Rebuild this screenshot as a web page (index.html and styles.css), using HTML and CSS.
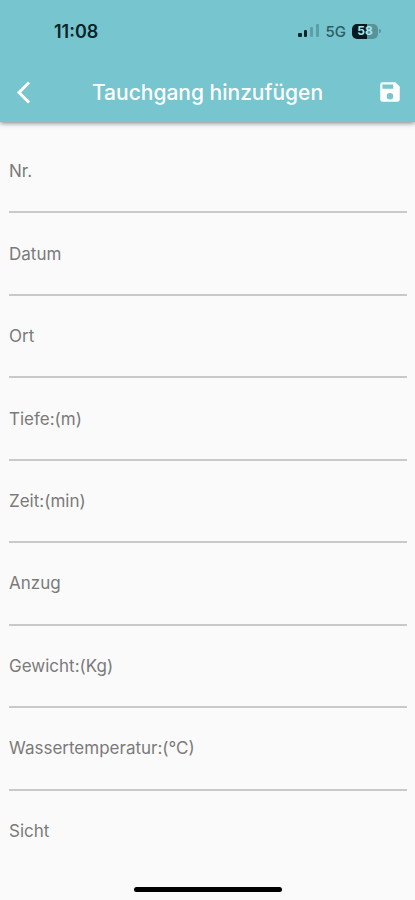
FILE: index.html
```html
<!DOCTYPE html>
<html lang="de">
<head>
<meta charset="utf-8">
<meta name="viewport" content="width=device-width, initial-scale=1">
<title>Tauchgang hinzufügen</title>
<link rel="stylesheet" href="styles.css">
</head>
<body>
<header class="top">
  <div class="status">
    <time class="clock">11:08</time>
    <div class="indicators">
      <svg class="signal" width="22" height="14" viewBox="0 0 22 14" aria-hidden="true">
        <rect x="0" y="9" width="4" height="4" rx="1" fill="#09252b"/>
        <rect x="6" y="6" width="3" height="7" rx="1" fill="#09252b"/>
        <rect x="12" y="3" width="3" height="10" rx="1" fill="#5b9ea6"/>
        <rect x="18" y="0" width="3" height="13" rx="1" fill="#5b9ea6"/>
      </svg>
      <span class="network">5G</span>
      <div class="battery"><span class="level">58</span></div>
    </div>
  </div>
  <div class="bar">
    <button class="icon-button" type="button" aria-label="Zurück">
      <svg width="24" height="24" viewBox="0 0 24 24" aria-hidden="true"><path d="M16 2.500 6 12.500 16 22.500" fill="none" stroke="#fff" stroke-width="3"/></svg>
    </button>
    <h1 class="title">Tauchgang hinzufügen</h1>
    <button class="icon-button" type="submit" form="dive" aria-label="Speichern">
      <svg width="26" height="26" viewBox="0 0 24 24" aria-hidden="true"><path d="M17 3H5a2 2 0 0 0-2 2v14a2 2 0 0 0 2 2h14a2 2 0 0 0 2-2V7l-4-4zm-5 16a3 3 0 1 1 0-6 3 3 0 0 1 0 6zm3-10H5V5h10v4z" fill="#fff"/></svg>
    </button>
  </div>
</header>
<form class="fields" id="dive">
  <div class="field"><label for="nr">Nr.</label><input id="nr" type="text"></div>
  <div class="field"><label for="datum">Datum</label><input id="datum" type="text"></div>
  <div class="field"><label for="ort">Ort</label><input id="ort" type="text"></div>
  <div class="field"><label for="tiefe">Tiefe:(m)</label><input id="tiefe" type="text"></div>
  <div class="field"><label for="zeit">Zeit:(min)</label><input id="zeit" type="text"></div>
  <div class="field"><label for="anzug">Anzug</label><input id="anzug" type="text"></div>
  <div class="field"><label for="gewicht">Gewicht:(Kg)</label><input id="gewicht" type="text"></div>
  <div class="field"><label for="temperatur">Wassertemperatur:(°C)</label><input id="temperatur" type="text"></div>
  <div class="field"><label for="sicht">Sicht</label><input id="sicht" type="text"></div>
</form>
<footer class="home"><div class="home-indicator"></div></footer>
</body>
</html>
```
FILE: styles.css
```css
* {
  box-sizing: border-box;
}

body {
  margin: 0;
  min-height: 100vh;
  display: flex;
  flex-direction: column;
  background: #fafafa;
  font-family: Inter, "Liberation Sans", sans-serif;
}

.top {
  background: #77c5ce;
  box-shadow: 0 1px 5px rgba(0, 0, 0, 0.5);
}

.status {
  height: 62px;
  padding: 0 35px 0 54px;
  display: flex;
  align-items: center;
  justify-content: space-between;
  color: #09252b;
}

.clock {
  font-size: 18px;
  font-weight: 600;
}

.indicators {
  display: flex;
  align-items: center;
  gap: 6px;
}

.network {
  font-size: 15px;
  font-weight: 500;
  color: #2d5d65;
}

.battery {
  position: relative;
  width: 26px;
  height: 15px;
  margin-right: 2px;
  border-radius: 5px;
  background: linear-gradient(90deg, #041a1e 58%, #56939b 58%);
  display: grid;
  place-items: center;
}

.battery::after {
  content: "";
  position: absolute;
  left: 27px;
  top: 5px;
  width: 2px;
  height: 4px;
  border-radius: 0 2px 2px 0;
  background: #56939b;
}

.level {
  font-size: 12px;
  line-height: 14px;
  font-weight: 700;
  color: #a9e2e9;
}

.bar {
  height: 60px;
  padding: 0 5px;
  display: flex;
  align-items: center;
  justify-content: space-between;
}

.icon-button {
  width: 40px;
  height: 40px;
  padding: 0;
  border: 0;
  background: none;
  display: grid;
  place-items: center;
}

.title {
  margin: 0;
  font-size: 21px;
  font-weight: 500;
  color: #fff;
}

.fields {
  flex: 1;
  padding: 9px 8px 0 9px;
  display: grid;
  grid-auto-rows: 1fr;
}

.field {
  display: grid;
  align-items: center;
  min-height: 64px;
  border-bottom: 2px solid #c9c9c9;
}

.field:last-child {
  border-bottom-color: transparent;
}

.field label,
.field input {
  grid-area: 1 / 1;
}

.field label {
  font-size: 17px;
  font-weight: 400;
  color: #7a7a7a;
}

.field input {
  width: 100%;
  height: 48px;
  padding: 0;
  border: 0;
  outline: 0;
  background: none;
  font: inherit;
}

.home {
  height: 27px;
  display: flex;
  justify-content: center;
  align-items: center;
  padding-top: 5px;
}

.home-indicator {
  width: 148px;
  height: 5px;
  border-radius: 3px;
  background: #000;
}
```
